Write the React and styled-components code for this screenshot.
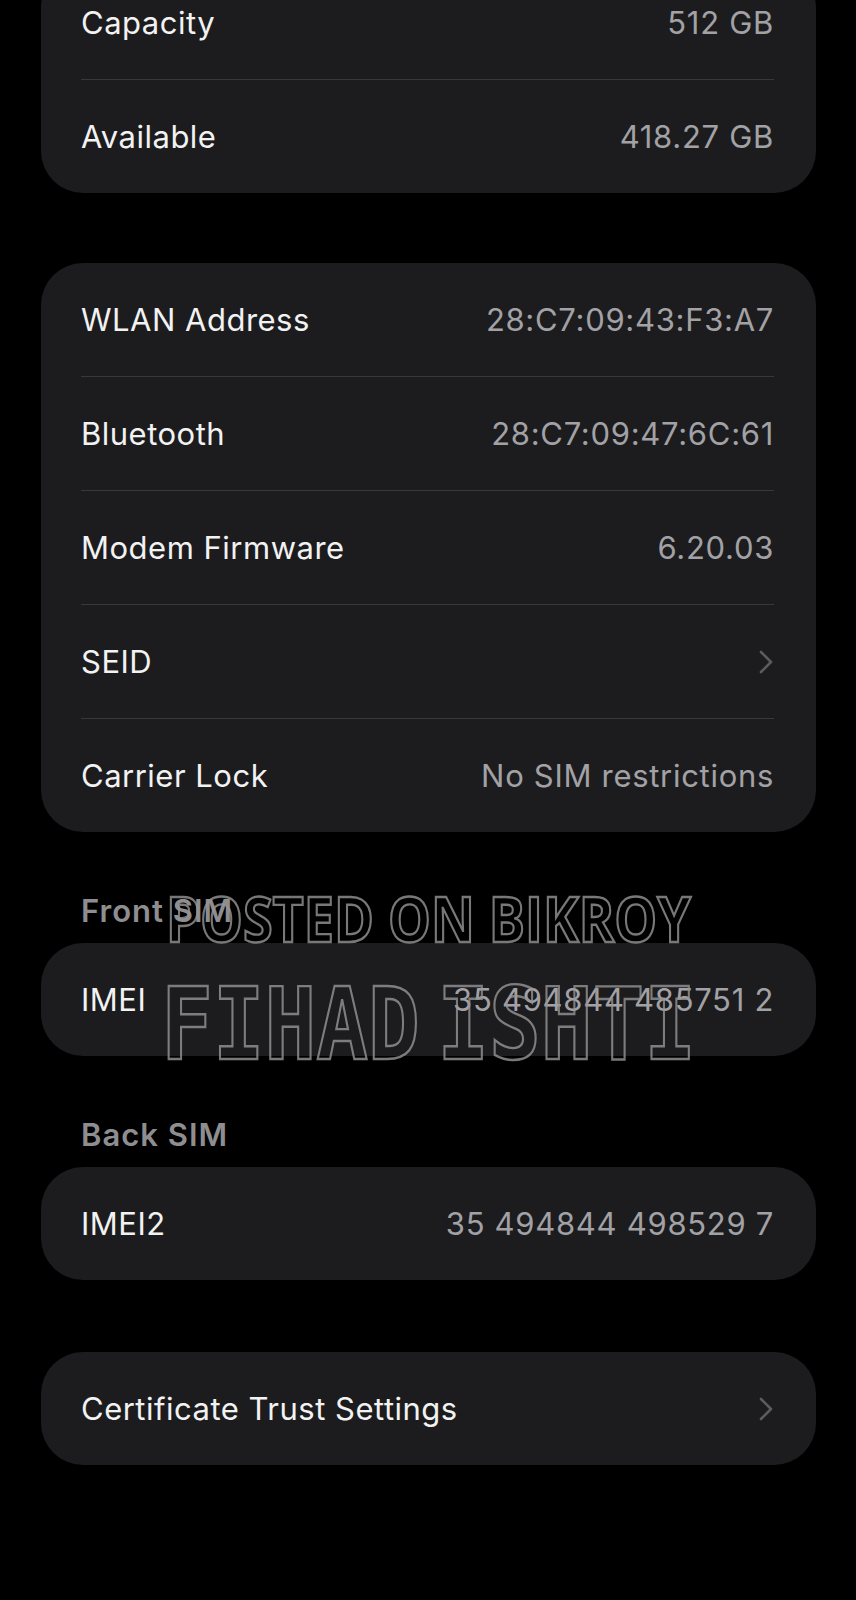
import React from 'react';
import styled, { createGlobalStyle } from 'styled-components';

const GlobalStyle = createGlobalStyle`
  html, body {
    margin: 0;
    padding: 0;
    background: #000000;
  }
  body {
    font-family: Inter, "Liberation Sans", Arial, sans-serif;
    -webkit-font-smoothing: antialiased;
  }
`;

const storage = [
  { label: 'Capacity', value: '512 GB' },
  { label: 'Available', value: '418.27 GB' },
];

const network = [
  { label: 'WLAN Address', value: '28:C7:09:43:F3:A7' },
  { label: 'Bluetooth', value: '28:C7:09:47:6C:61' },
  { label: 'Modem Firmware', value: '6.20.03' },
  { label: 'SEID', chevron: true },
  { label: 'Carrier Lock', value: 'No SIM restrictions' },
];

function Chevron() {
  return (
    <ChevronIcon width="14" height="24" viewBox="0 0 14 24" fill="none">
      <polyline
        points="2,2 12,12 2,22"
        stroke="#5c5c60"
        strokeWidth="2.6"
        strokeLinecap="round"
        strokeLinejoin="round"
      />
    </ChevronIcon>
  );
}

function InfoRow({ label, value, chevron }) {
  return (
    <Row>
      <Label>{label}</Label>
      {chevron ? <Chevron /> : <Value>{value}</Value>}
    </Row>
  );
}

export default function App() {
  return (
    <>
      <GlobalStyle />
      <Page>
        <Card>
          {storage.map((r) => (
            <InfoRow key={r.label} {...r} />
          ))}
        </Card>

        <Card $mt={70}>
          {network.map((r) => (
            <InfoRow key={r.label} {...r} />
          ))}
        </Card>

        <Section $mt={62}>
          <SectionHeader>Front SIM</SectionHeader>
          <Card>
            <InfoRow label="IMEI" value="35 494844 485751 2" />
          </Card>
          <Watermark>
            <MarkTop>POSTED ON BIKROY</MarkTop>
            <MarkName>FIHAD ISHTI</MarkName>
          </Watermark>
        </Section>

        <Section $mt={62}>
          <SectionHeader>Back SIM</SectionHeader>
          <Card>
            <InfoRow label="IMEI2" value="35 494844 498529 7" />
          </Card>
        </Section>

        <Card $mt={72}>
          <InfoRow label="Certificate Trust Settings" chevron />
        </Card>
      </Page>
    </>
  );
}

const Page = styled.div`
  margin-top: -34px;
  padding: 0 40px 135px 41px;
  min-height: 1634px;
  box-sizing: border-box;
  background: #000000;
`;

const Card = styled.div`
  margin-top: ${(p) => p.$mt || 0}px;
  padding: 0 42px 0 40px;
  background: #1c1c1e;
  border-radius: 42px;
`;

const Row = styled.div`
  display: flex;
  align-items: center;
  justify-content: space-between;
  height: 113px;

  & + & {
    border-top: 1px solid #38383a;
  }
`;

const Label = styled.span`
  font-size: 31px;
  letter-spacing: 0.5px;
  color: #f2f2f2;
  white-space: nowrap;
`;

const Value = styled.span`
  font-size: 31px;
  letter-spacing: 0.7px;
  color: #a2a2a6;
  white-space: nowrap;
`;

const ChevronIcon = styled.svg`
  display: block;
  flex-shrink: 0;
  margin-right: 1px;
`;

const Section = styled.div`
  position: relative;
  margin-top: ${(p) => p.$mt || 0}px;
`;

const SectionHeader = styled.div`
  margin: 0 0 15px 40px;
  line-height: 34px;
  font-size: 31px;
  font-weight: 600;
  letter-spacing: 1px;
  color: #8e8e90;
`;

const Watermark = styled.div`
  position: absolute;
  top: -7px;
  left: 0;
  right: 0;
  text-align: center;
  pointer-events: none;
  color: transparent;
  -webkit-text-stroke: 2.4px rgba(150, 150, 150, 0.8);
`;

const MarkTop = styled.div`
  font-family: "Open Sans", "DejaVu Sans", sans-serif;
  font-weight: 700;
  font-size: 62px;
  line-height: 62px;
  white-space: nowrap;
  transform: scaleX(0.87);
`;

const MarkName = styled.div`
  margin-top: 26px;
  font-family: "DejaVu Sans Mono", monospace;
  font-weight: 700;
  font-size: 100px;
  line-height: 100px;
  white-space: nowrap;
  word-spacing: -40px;
  transform: scaleX(0.86);
`;
